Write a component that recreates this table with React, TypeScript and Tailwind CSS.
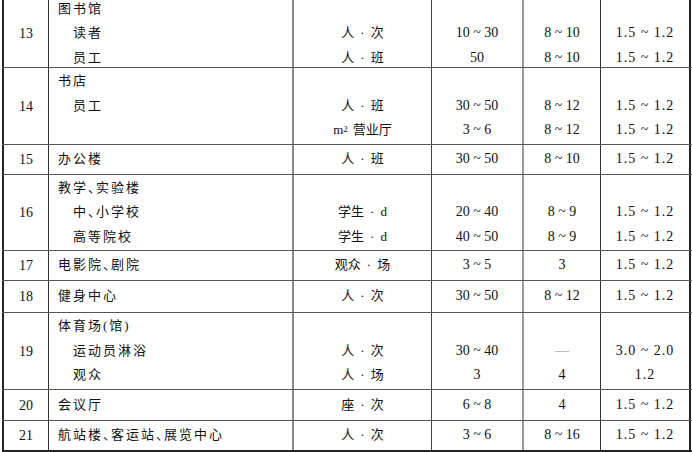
import type { ReactNode } from "react";

type Line = {
  name?: ReactNode;
  sub?: boolean;
  unit?: ReactNode;
  val?: string;
  hrs?: string;
  coef?: string;
};

type Row = { no: string; h: string; lines: Line[]; last?: boolean };

// the enumeration comma sits in a half-width slot in the reference
const Dun = () => <span className="tracking-[-5px]">、</span>;

const Dot = ({ a, b }: { a: ReactNode; b: ReactNode }) => (
  <span>
    {a}
    <span className="mx-[6px]">·</span>
    {b}
  </span>
);

const rows: Row[] = [
  {
    no: "13",
    h: "h-[68px]",
    lines: [
      { name: "图书馆" },
      { name: "读者", sub: true, unit: <Dot a="人" b="次" />, val: "10 ~ 30", hrs: "8 ~ 10", coef: "1.5 ~ 1.2" },
      { name: "员工", sub: true, unit: <Dot a="人" b="班" />, val: "50", hrs: "8 ~ 10", coef: "1.5 ~ 1.2" },
    ],
  },
  {
    no: "14",
    h: "h-[77px]",
    lines: [
      { name: "书店" },
      { name: "员工", sub: true, unit: <Dot a="人" b="班" />, val: "30 ~ 50", hrs: "8 ~ 12", coef: "1.5 ~ 1.2" },
      {
        unit: (
          <span>
            m<sup className="text-[9px] relative top-[-2px]">2</sup>
            <span className="ml-[5px]">营业厅</span>
          </span>
        ),
        val: "3 ~ 6",
        hrs: "8 ~ 12",
        coef: "1.5 ~ 1.2",
      },
    ],
  },
  {
    no: "15",
    h: "h-[30px]",
    lines: [{ name: "办公楼", unit: <Dot a="人" b="班" />, val: "30 ~ 50", hrs: "8 ~ 10", coef: "1.5 ~ 1.2" }],
  },
  {
    no: "16",
    h: "h-[76px]",
    lines: [
      { name: <>教学<Dun />实验楼</> },
      { name: <>中<Dun />小学校</>, sub: true, unit: <Dot a="学生" b="d" />, val: "20 ~ 40", hrs: "8 ~ 9", coef: "1.5 ~ 1.2" },
      { name: "高等院校", sub: true, unit: <Dot a="学生" b="d" />, val: "40 ~ 50", hrs: "8 ~ 9", coef: "1.5 ~ 1.2" },
    ],
  },
  {
    no: "17",
    h: "h-[30px]",
    lines: [{ name: <>电影院<Dun />剧院</>, unit: <Dot a="观众" b="场" />, val: "3 ~ 5", hrs: "3", coef: "1.5 ~ 1.2" }],
  },
  {
    no: "18",
    h: "h-[32px]",
    lines: [{ name: "健身中心", unit: <Dot a="人" b="次" />, val: "30 ~ 50", hrs: "8 ~ 12", coef: "1.5 ~ 1.2" }],
  },
  {
    no: "19",
    h: "h-[77px]",
    lines: [
      { name: "体育场(馆)" },
      { name: "运动员淋浴", sub: true, unit: <Dot a="人" b="次" />, val: "30 ~ 40", hrs: "—", coef: "3.0 ~ 2.0" },
      { name: "观众", sub: true, unit: <Dot a="人" b="场" />, val: "3", hrs: "4", coef: "1.2" },
    ],
  },
  {
    no: "20",
    h: "h-[31px]",
    lines: [{ name: "会议厅", unit: <Dot a="座" b="次" />, val: "6 ~ 8", hrs: "4", coef: "1.5 ~ 1.2" }],
  },
  {
    no: "21",
    h: "h-[31px]",
    last: true,
    lines: [
      {
        name: <>航站楼<Dun />客运站<Dun />展览中心</>,
        unit: <Dot a="人" b="次" />,
        val: "3 ~ 6",
        hrs: "8 ~ 16",
        coef: "1.5 ~ 1.2",
      },
    ],
  },
];

function Lines({ items, className = "" }: { items: ReactNode[]; className?: string }) {
  return (
    <div className={`flex flex-col ${className}`}>
      {items.map((it, i) => (
        <div key={i} className="h-[24.5px] leading-[24.5px] whitespace-nowrap">
          {it ?? ""}
        </div>
      ))}
    </div>
  );
}

export default function App() {
  return (
    <div
      className="w-[692px] h-[452px] overflow-hidden bg-white pl-[2px] text-[#111]"
      style={{ fontFamily: '"Liberation Serif", "Noto Sans CJK SC", serif' }}
    >
      {rows.map((r) => (
        <div
          key={r.no}
          className={`flex ${r.h} ${r.last ? "border-b-2 border-b-[#222]" : "border-b border-b-[#555]"}`}
        >
          <div className="w-[47px] shrink-0 flex items-center justify-center border-l-2 border-l-[#222] border-r border-r-[#333] text-[14px]">
            {r.no}
          </div>
          <div className="w-[245px] shrink-0 flex items-center border-r-2 border-r-[#8c8c8c] text-[13px] tracking-[2px]">
            <div className="flex flex-col">
              {r.lines.map((l, i) => (
                <div
                  key={i}
                  className={`h-[24.5px] leading-[24.5px] whitespace-nowrap ${l.sub ? "pl-[24px]" : "pl-[9px]"}`}
                >
                  {l.name ?? ""}
                </div>
              ))}
            </div>
          </div>
          <div className="w-[138px] shrink-0 flex items-center justify-center border-r border-r-[#444] text-[13px]">
            <Lines items={r.lines.map((l) => l.unit)} className="items-center" />
          </div>
          <div className="w-[92px] shrink-0 flex items-center justify-center border-r-2 border-r-[#9a9a9a] text-[14px]">
            <Lines items={r.lines.map((l) => l.val)} className="items-center" />
          </div>
          <div className="w-[77px] shrink-0 flex items-center justify-center border-r border-r-[#333] text-[14px]">
            <Lines
              items={r.lines.map((l) =>
                l.hrs === "—" ? <span className="text-[#888]">—</span> : l.hrs
              )}
              className="items-center"
            />
          </div>
          <div className="w-[90px] shrink-0 flex items-center justify-center border-r-2 border-r-[#222] text-[14px] tracking-[1px]">
            <Lines items={r.lines.map((l) => l.coef)} className="items-center" />
          </div>
        </div>
      ))}
    </div>
  );
}
